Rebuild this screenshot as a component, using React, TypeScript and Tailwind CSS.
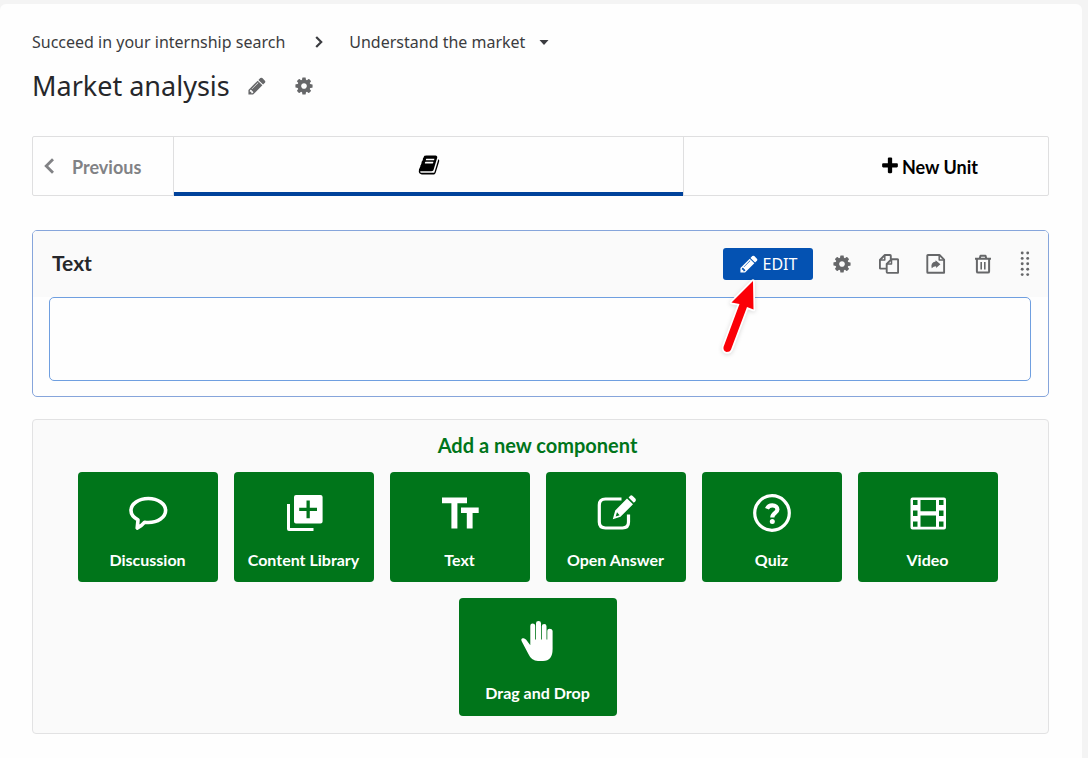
import type { ReactNode } from "react";

type IconProps = { className?: string };

function Glyph({ d, className }: { d: string; className?: string }) {
  return (
    <svg viewBox="0 0 1792 1792" fill="currentColor" className={className} aria-hidden="true">
      <path d={d} />
    </svg>
  );
}

const PENCIL =
  "M491 1536l91-91-235-235-91 91v107h128v128h107zm523-928q0-22-22-22-10 0-17 7l-542 542q-7 7-7 17 0 22 22 22 10 0 17-7l542-542q7-7 7-17zm-54-192l416 416-832 832h-416v-416zm683 96q0 53-37 90l-166 166-416-416 166-165q36-38 90-38 53 0 91 38l235 234q37 39 37 91z";
const GEAR =
  "M1152 896q0-106-75-181t-181-75-181 75-75 181 75 181 181 75 181-75 75-181zm512-109v222q0 12-8 23t-20 13l-185 28q-19 54-39 91 35 50 107 138 10 12 10 25t-9 23q-27 37-99 108t-94 71q-12 0-26-9l-138-108q-44 23-91 38-16 136-29 186-7 28-36 28h-222q-14 0-24.5-8.5t-11.5-21.5l-28-184q-49-16-90-37l-141 107q-10 9-25 9-14 0-25-11-126-114-165-168-7-10-7-23 0-12 8-23 15-21 51-66.5t54-70.5q-27-50-41-99l-183-27q-13-2-21-12.5t-8-23.5v-222q0-12 8-23t19-13l186-28q14-46 39-92-40-57-107-138-10-12-10-24 0-10 9-23 26-36 98.5-107.5t94.5-71.5q13 0 26 10l138 107q44-23 91-38 16-136 29-186 7-28 36-28h222q14 0 24.5 8.5t11.5 21.5l28 184q49 16 90 37l142-107q9-9 24-9 13 0 25 10 129 119 165 170 7 8 7 22 0 12-8 23-15 21-51 66.5t-54 70.5q26 50 41 98l183 28q13 2 21 12.5t8 23.5z";
const BOOK =
  "M1703 478q40 57 18 129l-275 906q-19 64-76.5 107.5t-122.5 43.5h-923q-77 0-148.5-53.5t-99.5-131.5q-24-67-2-127 0-4 3-27t4-37q1-8-3-21.5t-3-19.5q2-11 8-21t16.5-23.5 16.5-23.5q23-38 45-91.5t30-91.5q3-10 .5-30t-.5-28q3-11 17-28t17-23q21-36 42-92t25-90q1-9-2.5-32t.5-28q4-13 22-30.5t22-22.5q19-26 42.5-84.5t27.5-96.5q1-8-3-25.5t-2-26.5q2-8 9-18t18-23 17-21q8-12 16.5-30.5t15-35 16-36 19.5-32 26.5-23.5 36-11.5 47.5 5.5l-1 3q38-9 51-9h761q74 0 114 56t18 130l-274 906q-36 119-71.5 153.5t-128.5 34.5h-869q-27 0-38 15-11 16-1 43 24 70 144 70h923q29 0 56-15.5t35-41.5l300-987q7-22 5-57 38 15 59 43zm-1064 2q-4 13 2 22.5t20 9.5h608q13 0 25.5-9.5t16.5-22.5l21-64q4-13-2-22.5t-20-9.5h-608q-13 0-25.5 9.5t-16.5 22.5zm-83 256q-4 13 2 22.5t20 9.5h608q13 0 25.5-9.5t16.5-22.5l21-64q4-13-2-22.5t-20-9.5h-608q-13 0-25.5 9.5t-16.5 22.5z";
const PLUS =
  "M1600 736v192q0 40-28 68t-68 28h-416v416q0 40-28 68t-68 28h-192q-40 0-68-28t-28-68v-416h-416q-40 0-68-28t-28-68v-192q0-40 28-68t68-28h416v-416q0-40 28-68t68-28h192q40 0 68 28t28 68v416h416q40 0 68 28t28 68z";

function CopyIcon({ className }: IconProps) {
  return (
    <svg viewBox="0 0 20 20" fill="none" stroke="currentColor" strokeWidth="1.9" strokeLinejoin="round" className={className} aria-hidden="true">
      <path d="M7 14.6H1.5Q.9 14.6.9 14V6L5.8 1H11q.8 0 .8.8v3.4" />
      <path d="M5.8 1v5H.9" strokeWidth="1.5" />
      <path d="M12.5 5.3H18.3q.8 0 .8.8v12q0 .8-.8.8H8.500q-.8 0-.8-.8V10z" />
      <path d="M12.500 5.300v4.800H7.700" strokeWidth="1.5" />
    </svg>
  );
}

function MoveIcon({ className }: IconProps) {
  return (
    <svg viewBox="0 0 20 20" fill="none" stroke="currentColor" strokeWidth="1.9" strokeLinejoin="round" className={className} aria-hidden="true">
      <path d="M1.900 1H13.500l4.600 4.600v13.200H1.900q-.6 0-.6-.6V1.600Q1.300 1 1.900 1z" />
      <path d="M13.200 1.200v4.700H18" strokeWidth="1.5" />
      <path d="M5.700 14.300q-1.500-5.700 3.900-6.700V6.200l4.800 4-4.300 3.900v-1.900q-2.600 0-4.400 2.100z" fill="currentColor" stroke="none" />
    </svg>
  );
}

function TrashIcon({ className }: IconProps) {
  return (
    <svg viewBox="0 0 20 20" fill="none" stroke="currentColor" strokeWidth="2" strokeLinejoin="round" className={className} aria-hidden="true">
      <path d="M2 4.700H18M6.700 4.500L7.500 1.800H12.500L13.300 4.500M3.900 5v12.400q0 1.200 1.200 1.200h9.800q1.200 0 1.200-1.200V5" />
      <path d="M8.200 8v7.500M11.800 8v7.500" strokeWidth="1.600" />
    </svg>
  );
}

function GripIcon({ className }: IconProps) {
  return (
    <svg viewBox="0 0 10 26" fill="currentColor" className={className} aria-hidden="true">
      {[2, 7.4, 12.8, 18.2, 23.6].map((y) => (
        <g key={y}>
          <circle cx="2.2" cy={y} r="1.45" />
          <circle cx="7.7" cy={y} r="1.45" />
        </g>
      ))}
    </svg>
  );
}

function DiscussionIcon() {
  return (
    <svg viewBox="0 0 40 40" fill="none" stroke="currentColor" strokeWidth="3.6" strokeLinejoin="round" className="size-10" aria-hidden="true">
      <path d="M20.300 5.500c9.600 0 17.300 5.300 17.300 12s-7.700 12-17.300 12q-1.800 0-3.600-.3-3.200 3.900-7.500 5.900l.8-8.300C5.900 24.700 3 21.300 3 17.500c0-6.700 7.700-12 17.300-12z" />
    </svg>
  );
}

function LibraryIcon() {
  return (
    <svg viewBox="0 0 40 40" fill="currentColor" className="size-10" aria-hidden="true">
      <path fillRule="evenodd" d="M11.500 2H36.500Q38.600 2 38.600 4V28.500Q38.600 30.500 36.500 30.500H12Q10 30.500 10 28.500V4Q10 2 12 2zM22.500 7.600v7.200H15.200v3.200h7.300V25.300h3.300V18H33V14.800H25.800V7.600z" />
      <path d="M3 11H6V35H29.500V38H5Q3 38 3 36z" />
    </svg>
  );
}

function TextIcon() {
  return (
    <svg viewBox="0 0 40 40" fill="currentColor" className="size-10" aria-hidden="true">
      <path d="M2 4.500H27V10.200H17.400V35.500H11.400V10.200H2z" />
      <path d="M21 14.500H38.700V20H32.600V35.500H26.800V20H21z" />
    </svg>
  );
}

function OpenAnswerIcon() {
  return (
    <svg viewBox="0 0 40 40" className="size-10" aria-hidden="true">
      <path d="M25.500 6H9.500Q3.300 6 3.300 12V29Q3.300 35 9.500 35H26.500Q32.500 35 32.500 29V21.500" fill="none" stroke="currentColor" strokeWidth="3.2" />
      <path fillRule="evenodd" fill="currentColor" d="M31 5.500L37 11.300 24.500 23.700 16.800 26.300 19.200 17.500zM21 19.300L19.700 23.500 23.600 22.200z" />
      <path d="M34 2.900Q35.300 1.700 36.700 3L39.300 5.600Q40.500 7 39.200 8.400L37.800 9.800 32.600 4.400z" fill="currentColor" />
    </svg>
  );
}

function QuizIcon() {
  return (
    <svg viewBox="0 0 40 40" fill="none" stroke="currentColor" className="size-10" aria-hidden="true">
      <circle cx="20" cy="20" r="17.300" strokeWidth="3.2" />
      <path d="M15 15.700Q16.300 12.300 20.300 12.300C23.500 12.300 25.400 14.100 25.400 16.500C25.400 20 20.300 19.900 20.300 24.500" strokeWidth="4.2" />
      <circle cx="20.300" cy="28.600" r="2.500" fill="currentColor" stroke="none" />
    </svg>
  );
}

function VideoIcon() {
  return (
    <svg viewBox="0 0 40 40" fill="currentColor" className="size-10" aria-hidden="true">
      <path
        fillRule="evenodd"
        d="M4.500 4.500H36Q38 4.500 38 6.500V34.500Q38 36.500 36 36.500H4.500Q2.500 36.500 2.500 34.500V6.500Q2.500 4.500 4.500 4.500zM5 7V12H9.500V7zM5 17.500V23H9.500V17.500zM5 28.500V33.800H9.500V28.500zM31 7V12H35.500V7zM31 17.500V23H35.500V17.500zM31 28.500V33.800H35.500V28.500zM12.500 7V18.300H28V7zM12.500 22.500V33.800H28V22.500z"
      />
    </svg>
  );
}

function HandIcon() {
  return (
    <svg viewBox="0 0 40 42" fill="currentColor" className="h-[42px] w-10" aria-hidden="true">
      <path d="M12.300 5.800Q12.300 3.500 14.700 3.500T17.200 5.800V19.500H18V3.200Q18 1 20.500 1T23 3.200V19.500H23.800V6.300Q23.800 4 26.200 4T28.500 6.300V19.500H29.300V10.800Q29.300 8.700 31.700 8.700T34.600 10.800V29Q34.600 41 25 41H20Q13.500 41 10.400 34L3.800 21.500Q2.500 18.800 4.600 18.300T8.200 19.800L12.300 25.200z" />
    </svg>
  );
}

function IconButton({ label, children }: { label: string; children: ReactNode }) {
  return (
    <button type="button" aria-label={label} className="flex size-6 cursor-pointer items-center justify-center text-[#666769]">
      {children}
    </button>
  );
}

function ComponentButton({ label, icon, large = false }: { label: string; icon: ReactNode; large?: boolean }) {
  return (
    <button
      type="button"
      className={
        large
          ? "flex h-[118px] w-[158px] cursor-pointer flex-col items-center rounded bg-[#00751a] pt-[22px] text-white"
          : "flex h-[110px] w-[140px] cursor-pointer flex-col items-center rounded bg-[#00751a] pt-[21px] text-white"
      }
    >
      {icon}
      <span className={large ? "mt-[19px] text-base leading-6 font-bold" : "mt-[15px] text-base leading-6 font-bold"}>{label}</span>
    </button>
  );
}

export default function App() {
  return (
    <div className="min-h-screen bg-[#f4f4f4] pt-1 pr-1.5 font-['Lato',sans-serif] text-[#26272b]">
      <main className="min-h-[754px] rounded-t-md bg-[#fefefe] pt-[26px] pr-[33px] pb-6 pl-8">
        <nav aria-label="Breadcrumb" className="flex h-6 items-center font-['Noto_Sans',sans-serif] text-base text-[#3b3c40]">
          <a href="#course">Succeed in your internship search</a>
          <svg viewBox="0 0 8 12" className="ml-[30px] h-3 w-2" fill="none" stroke="currentColor" strokeWidth="2.2" aria-hidden="true">
            <path d="M1.200 1L6.200 6l-5 5" />
          </svg>
          <button type="button" className="ml-[26px] flex cursor-pointer items-center gap-3.5">
            Understand the market
            <svg viewBox="0 0 10 5" className="h-[5px] w-2.5" fill="currentColor" aria-hidden="true">
              <path d="M.5 0h9L5 5z" />
            </svg>
          </button>
        </nav>

        <div className="mt-3 flex h-10 items-center">
          <h1 className="font-['Noto_Sans',sans-serif] text-[27px] leading-10">Market analysis</h1>
          <div className="ml-[15px] flex items-center gap-[23px]">
            <IconButton label="Edit title">
              <Glyph d={PENCIL} className="size-5" />
            </IconButton>
            <IconButton label="Unit settings">
              <Glyph d={GEAR} className="size-5" />
            </IconButton>
          </div>
        </div>

        <div className="mt-[30px] flex h-[60px] rounded-xs border border-[#dfdfe0] text-lg font-bold">
          <button type="button" className="flex w-[141px] shrink-0 cursor-pointer items-center gap-[18px] border-r border-[#dfdfe0] pl-[11px] text-[#818285]">
            <svg viewBox="0 0 10 16" className="h-4 w-2.5" fill="none" stroke="currentColor" strokeWidth="2.8" aria-hidden="true">
              <path d="M9 1.200L2.200 8 9 14.800" />
            </svg>
            <span className="pt-0.5">Previous</span>
          </button>
          <button type="button" aria-label="Unit" className="-mb-px flex flex-[7] cursor-pointer items-center justify-center border-b-4 border-[#00429b] text-black">
            <Glyph d={BOOK} className="size-[22px]" />
          </button>
          <button type="button" className="flex flex-[5] cursor-pointer items-center justify-end border-l border-[#dfdfe0] text-black">
            <span className="mr-[70px] flex items-center gap-0.5">
              <Glyph d={PLUS} className="size-5" />
              <span className="pt-0.5">New Unit</span>
            </span>
          </button>
        </div>

        <section className="mt-[34px] rounded-[5px] border border-[#86a5db] pb-[15px]">
          <header className="flex h-[66px] items-center justify-between rounded-t bg-[#fafafa] pr-[11px] pl-[19px]">
            <h2 className="pb-0.5 text-[21px] leading-7 font-bold">Text</h2>
            <div className="flex items-center">
              <div className="relative">
                <button type="button" className="flex h-8 w-[90px] cursor-pointer items-center justify-center gap-1 rounded-[3px] bg-[#0452b2] font-['Noto_Sans',sans-serif] text-base text-white">
                  <Glyph d={PENCIL} className="size-5" />
                  EDIT
                </button>
                <svg viewBox="0 0 40 76" className="pointer-events-none absolute top-[31px] -left-1 z-10 h-[76px] w-10 drop-shadow-sm" aria-hidden="true">
                  <path d="M34 2L12.500 23.500L20.500 25L4.500 68Q4 72 7.500 73Q11 73 12 70.500L28 28L34.500 30.500z" fill="#fb0007" stroke="#fff" strokeWidth="3.5" strokeLinejoin="round" paintOrder="stroke" />
                </svg>
              </div>
              <div className="ml-[17px] flex gap-[23px]">
                <IconButton label="Settings"><Glyph d={GEAR} className="size-5" /></IconButton>
                <IconButton label="Duplicate"><CopyIcon className="size-5" /></IconButton>
                <IconButton label="Move"><MoveIcon className="size-5" /></IconButton>
                <IconButton label="Delete"><TrashIcon className="size-5" /></IconButton>
              </div>
              <button type="button" aria-label="Drag to reorder" className="ml-[18px] flex w-6 cursor-grab justify-center text-[#666769]">
                <GripIcon className="h-[26px] w-2.5" />
              </button>
            </div>
          </header>
          <div className="mr-[17px] ml-4 h-[84px] rounded-[5px] border border-[#6f9fe0]" />
        </section>

        <section className="mt-[22px] rounded border border-[#e2e2e3] bg-[#fafafa] pt-[11px] pr-[46px] pb-[17px] pl-10">
          <h2 className="text-center text-xl leading-7 font-bold text-[#00751a]">Add a new component</h2>
          <div className="mt-[13px] flex flex-wrap justify-center gap-4">
            <ComponentButton label="Discussion" icon={<DiscussionIcon />} />
            <ComponentButton label="Content Library" icon={<LibraryIcon />} />
            <ComponentButton label="Text" icon={<TextIcon />} />
            <ComponentButton label="Open Answer" icon={<OpenAnswerIcon />} />
            <ComponentButton label="Quiz" icon={<QuizIcon />} />
            <ComponentButton label="Video" icon={<VideoIcon />} />
            <ComponentButton label="Drag and Drop" icon={<HandIcon />} large />
          </div>
        </section>
      </main>
    </div>
  );
}
